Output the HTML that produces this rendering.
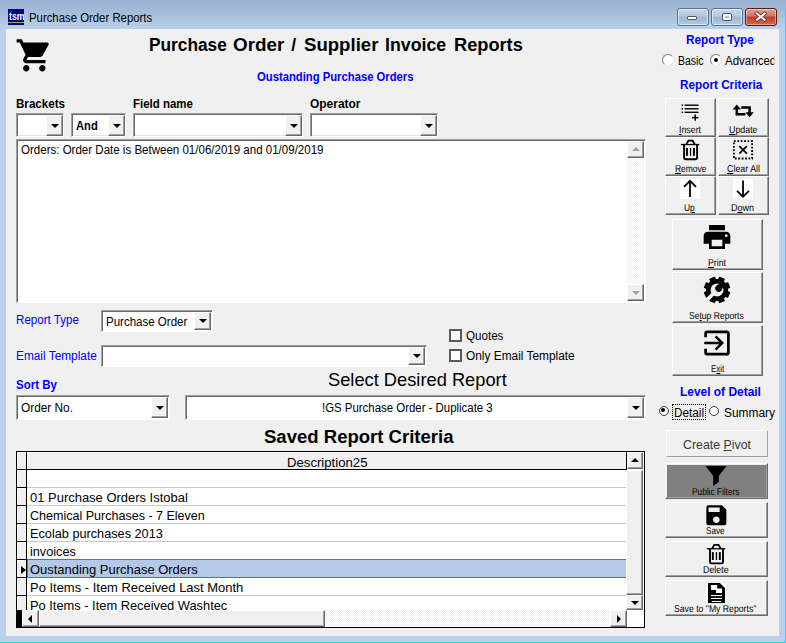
<!DOCTYPE html>
<html lang="en"><head><meta charset="utf-8"><title>Purchase Order Reports</title>
<style>
html,body{margin:0;padding:0;}
body{width:786px;height:643px;overflow:hidden;background:#b9d1ea;font-family:"Liberation Sans",sans-serif;}
#win{position:absolute;left:0;top:0;width:786px;height:643px;overflow:hidden;
 background:linear-gradient(#98b3d0 0,#a4bdd9 12px,#b1c9e4 22px,#b9d1ea 29px,#b9d1ea 100%);}
#win>*{position:absolute;box-sizing:border-box;}
.t{white-space:nowrap;line-height:1;transform-origin:0 50%;color:#000;}
.t u{text-decoration:underline;text-underline-offset:1px;}
.client{background:#f0f0f0;}
.sunk{background:#fff;border:1px solid;border-color:#a0a0a0 #fff #fff #a0a0a0;box-shadow:inset 1px 1px 0 #696969,inset -1px -1px 0 #e3e3e3;}
.cbtn{background:#f0f0f0;border:1px solid;border-color:#fff #696969 #696969 #fff;box-shadow:inset -1px -1px 0 #a0a0a0;}
.cbtn i.dn{position:absolute;left:50%;top:50%;margin:-2px 0 0 -4px;border:4px solid transparent;border-top-color:#000;border-bottom-width:0;width:0;height:0;}
.btn{background:#f0f0f0;border:1px solid;border-color:#fff #696969 #696969 #fff;box-shadow:inset -1px -1px 0 #a0a0a0;}
.ic{overflow:visible;}
.dith{background-color:#fff;background-image:conic-gradient(#f0f0f0 25%,#fff 0 50%,#f0f0f0 0 75%,#fff 0);background-size:2px 2px;}
.cbtn i{position:absolute;left:50%;top:50%;width:0;height:0;border:4px solid transparent;}
.cbtn i.upb{margin:-3px 0 0 -4px;border-bottom-color:#000;border-top-width:0;}
.cbtn i.upg{margin:-3px 0 0 -4px;border-bottom-color:#a0a0a0;border-top-width:0;}
.cbtn i.dng{margin:-2px 0 0 -4px;border-top-color:#a0a0a0;border-bottom-width:0;}
.cbtn i.lf{margin:-4px 0 0 -3px;border-right-color:#000;border-left-width:0;}
.cbtn i.rt{margin:-4px 0 0 -2px;border-left-color:#000;border-right-width:0;}
.chk{background:#f4f4f4;border:1px solid #555;box-shadow:inset 0 0 0 1px #8e8e8e;}
.radio{border-radius:50%;background:#fff;border:1px solid #6b6b6b;box-shadow:inset 1px 1px 1px #aaa;}
.radio i{position:absolute;left:3px;top:3px;width:5px;height:5px;border-radius:50%;background:#000;}
.radio{border-radius:50%;background:#fff;border:1.5px solid;border-color:#7c7c7c #e6e6e6 #e6e6e6 #7c7c7c;box-shadow:none;transform:rotate(0deg);}
.radio i{position:absolute;left:2.5px;top:2.5px;width:4px;height:4px;border-radius:50%;background:#000;}
.btn2{background:#f0f0f0;border:1px solid;border-color:#fff #a0a0a0 #a0a0a0 #fff;}
.radio2{border-radius:50%;background:#fff;border:1.6px solid #3c3c3c;}
.radio2 i{position:absolute;left:1.4px;top:1.4px;width:4px;height:4px;border-radius:50%;background:#000;}
.chk{background:#fff;border:2px solid #5a5a5a;box-shadow:none;}
.sunk2{background:#fff;border:1px solid;border-color:#a0a0a0 #fff #fff #a0a0a0;box-shadow:inset 1px 1px 0 #696969,inset -1px -1px 0 #fff;}

</style></head>
<body>
<div id="win">
<div class="client" style="left:6px;top:29px;width:773px;height:607px;"></div>
<div class="" style="left:0px;top:642px;width:786px;height:1px;background:#22d0e2"></div>
<div class="" style="left:785px;top:8px;width:1px;height:635px;background:#35cdf0"></div>
<div class="" style="left:8px;top:9px;width:16px;height:16px;background:#000080;overflow:hidden"><span style="position:absolute;left:0.5px;top:1.5px;font:bold 11px/11px 'Liberation Sans',sans-serif;color:#fff;transform:scaleX(0.8);transform-origin:0 0">tsm</span><i style="position:absolute;left:0;top:13px;width:16px;height:1px;background:#b89a50"></i></div>
<span class="t" id="t1" style="left:28.50px;top:12.01px;font-size:12px;transform:scaleX(0.9472);">Purchase Order Reports</span>
<div class="" style="left:677px;top:8px;width:32px;height:18px;border:1px solid #5c7187;border-radius:3px;box-shadow:inset 0 0 0 1px rgba(255,255,255,.55);background:linear-gradient(#c4d6ea 0,#b2c8e0 45%,#9db7d4 50%,#b3c9e2 100%)"><i style="position:absolute;left:9px;top:7.4px;width:8.4px;height:2px;background:#fff;border:1px solid #4a5a6c;border-radius:1px"></i></div>
<div class="" style="left:711px;top:8px;width:32px;height:18px;border:1px solid #5c7187;border-radius:3px;box-shadow:inset 0 0 0 1px rgba(255,255,255,.55);background:linear-gradient(#c4d6ea 0,#b2c8e0 45%,#9db7d4 50%,#b3c9e2 100%)"><i style="position:absolute;left:11px;top:4.6px;width:4.4px;height:2.4px;background:transparent;border:2px solid #fff;outline:1px solid #4a5a6c;border-radius:1px"></i></div>
<div class="" style="left:745px;top:8px;width:32px;height:18px;border:1px solid #5a1a12;border-radius:3px;box-shadow:inset 0 0 0 1px rgba(255,255,255,.4);background:linear-gradient(#e0a294 0,#d07260 45%,#c04028 50%,#cf6a4e 100%)"><svg width="30" height="16" viewBox="0 0 30 16" style="position:absolute;left:0;top:0"><path d="M11 4.7 L18.6 10.7 M18.6 4.7 L11 10.7" stroke="#5a3a38" stroke-width="3.6" stroke-linecap="square"/><path d="M11 4.7 L18.6 10.7 M18.6 4.7 L11 10.7" stroke="#fff" stroke-width="2" stroke-linecap="square"/></svg></div>
<svg class="ic" style="left:14.7px;top:35.6px" width="38.6" height="38.6" viewBox="0 0 24 24"><path d="M7 18c-1.1 0-1.99.9-1.99 2S5.9 22 7 22s2-.9 2-2-.9-2-2-2zM1 2v2h2l3.6 7.59-1.35 2.45c-.16.28-.25.61-.25.96 0 1.1.9 2 2 2h12v-2H7.42c-.14 0-.25-.11-.25-.25l.03-.12.9-1.63h7.45c.75 0 1.41-.41 1.75-1.03l3.58-6.49c.08-.14.12-.31.12-.48 0-.55-.45-1-1-1H5.21l-.94-2H1zm16 16c-1.1 0-1.99.9-1.99 2s.89 2 1.99 2 2-.9 2-2-.9-2-2-2z"/></svg>
<span class="t" id="t2" style="left:148.90px;top:37.01px;font-size:17.5px;font-weight:700;transform:scaleX(0.9873);">Purchase</span>
<span class="t" id="t3" style="left:233.20px;top:37.01px;font-size:17.5px;font-weight:700;transform:scaleX(1.0765);">Order</span>
<span class="t" id="t4" style="left:291.20px;top:37.01px;font-size:17.5px;font-weight:700;">/</span>
<span class="t" id="t5" style="left:303.80px;top:37.01px;font-size:17.5px;font-weight:700;transform:scaleX(1.0627);">Supplier</span>
<span class="t" id="t6" style="left:385.20px;top:37.01px;font-size:17.5px;font-weight:700;transform:scaleX(1.0147);">Invoice</span>
<span class="t" id="t7" style="left:453.70px;top:37.01px;font-size:17.5px;font-weight:700;transform:scaleX(1.0405);">Reports</span>
<span class="t" id="t8" style="left:256.50px;top:71.01px;font-size:12px;font-weight:700;color:#0000ff;transform:scaleX(0.9387);">Oustanding Purchase Orders</span>
<span class="t" id="t9" style="left:16.30px;top:98.01px;font-size:12px;font-weight:700;transform:scaleX(0.9664);">Brackets</span>
<span class="t" id="t10" style="left:133.40px;top:98.01px;font-size:12px;font-weight:700;transform:scaleX(0.9539);">Field name</span>
<span class="t" id="t11" style="left:309.50px;top:98.01px;font-size:12px;font-weight:700;transform:scaleX(0.9963);">Operator</span>
<div class="sunk" style="left:16px;top:113px;width:48px;height:24px;"></div>
<div class="cbtn" style="left:46px;top:115px;width:17px;height:21px;"><i class="dn"></i></div>
<div class="sunk" style="left:71px;top:113px;width:55px;height:24px;"></div>
<div class="cbtn" style="left:108px;top:115px;width:17px;height:21px;"><i class="dn"></i></div>
<span class="t" id="t12" style="left:76.30px;top:120.01px;font-size:12px;font-weight:700;transform:scaleX(0.9302);">And</span>
<div class="sunk" style="left:133px;top:113px;width:170px;height:24px;"></div>
<div class="cbtn" style="left:285px;top:115px;width:17px;height:21px;"><i class="dn"></i></div>
<div class="sunk" style="left:310px;top:113px;width:128px;height:24px;"></div>
<div class="cbtn" style="left:420px;top:115px;width:17px;height:21px;"><i class="dn"></i></div>
<div class="sunk2" style="left:16px;top:139px;width:630px;height:164px;"></div>
<span class="t" id="t13" style="left:21.00px;top:144.01px;font-size:12px;transform:scaleX(0.9607);">Orders: Order Date is Between 01/06/2019 and 01/09/2019</span>
<div class="dith" style="left:627px;top:141px;width:17px;height:160px;"></div>
<div class="cbtn" style="left:627px;top:141px;width:17px;height:17px;"><i class="upg"></i></div>
<div class="cbtn" style="left:627px;top:284px;width:17px;height:17px;"><i class="dng"></i></div>
<span class="t" id="t14" style="left:16.20px;top:314.01px;font-size:12.5px;color:#0000ff;transform:scaleX(0.9281);">Report Type</span>
<div class="sunk2" style="left:101px;top:310px;width:112px;height:22px;"></div>
<div class="cbtn" style="left:194px;top:312px;width:17px;height:18px;"><i class="dn"></i></div>
<span class="t" id="t15" style="left:106.00px;top:316.01px;font-size:12.5px;transform:scaleX(0.9214);">Purchase Order</span>
<span class="t" id="t16" style="left:16.20px;top:350.01px;font-size:12.5px;color:#0000ff;transform:scaleX(0.9480);">Email Template</span>
<div class="sunk2" style="left:101px;top:345px;width:326px;height:22px;"></div>
<div class="cbtn" style="left:408px;top:347px;width:17px;height:18px;"><i class="dn"></i></div>
<span class="t" id="t17" style="left:16.20px;top:379.00px;font-size:12.5px;font-weight:700;color:#0000ff;transform:scaleX(0.9179);">Sort By</span>
<div class="sunk2" style="left:16px;top:395px;width:154px;height:25px;"></div>
<div class="cbtn" style="left:151px;top:397px;width:17px;height:21px;"><i class="dn"></i></div>
<span class="t" id="t18" style="left:21.00px;top:402.01px;font-size:12.5px;transform:scaleX(0.9473);">Order No.</span>
<div class="sunk2" style="left:185px;top:395px;width:461px;height:25px;"></div>
<div class="cbtn" style="left:627px;top:397px;width:17px;height:21px;"><i class="dn"></i></div>
<span class="t" id="t19" style="left:322.30px;top:402.01px;font-size:12.5px;transform:scaleX(0.9134);">!GS Purchase Order - Duplicate 3</span>
<span class="t" id="t20" style="left:328.40px;top:371.01px;font-size:18.5px;transform:scaleX(0.9879);">Select Desired Report</span>
<span class="t" id="t21" style="left:264.30px;top:429.01px;font-size:17.5px;font-weight:700;transform:scaleX(1.0589);">Saved Report Criteria</span>
<div class="chk" style="left:449px;top:329px;width:13px;height:13px;"></div>
<span class="t" id="t22" style="left:465.60px;top:330.00px;font-size:12.5px;transform:scaleX(0.9278);">Quotes</span>
<div class="chk" style="left:449px;top:349px;width:13px;height:13px;"></div>
<span class="t" id="t23" style="left:465.60px;top:350.01px;font-size:12.5px;transform:scaleX(0.9502);">Only Email Template</span>
<span class="t" id="t24" style="left:685.50px;top:33.00px;font-size:13px;font-weight:700;color:#0000ff;transform:scaleX(0.9054);">Report Type</span>
<div class="radio" style="left:662px;top:54px;width:12px;height:12px;"></div>
<span class="t" id="t25" style="left:677.70px;top:55.01px;font-size:12.5px;transform:scaleX(0.8372);">Basic</span>
<div class="radio" style="left:710px;top:54px;width:12px;height:12px;"><i></i></div>
<span class="t" id="t26" style="left:725.30px;top:55.01px;font-size:12.5px;transform:scaleX(0.9207);clip-path:inset(0 2.1px 0 0);">Advanced</span>
<span class="t" id="t27" style="left:679.80px;top:78.00px;font-size:13px;font-weight:700;color:#0000ff;transform:scaleX(0.9041);">Report Criteria</span>
<div class="btn" style="left:665px;top:98px;width:51px;height:39px;"></div>
<div class="btn" style="left:718px;top:98px;width:51px;height:39px;"></div>
<div class="btn" style="left:665px;top:137px;width:51px;height:39px;"></div>
<div class="btn" style="left:718px;top:137px;width:51px;height:39px;"></div>
<div class="btn" style="left:665px;top:176px;width:51px;height:39px;"></div>
<div class="btn" style="left:718px;top:176px;width:51px;height:39px;"></div>
<div class="btn" style="left:672px;top:219px;width:91px;height:51px;"></div>
<div class="btn" style="left:672px;top:272px;width:91px;height:51px;"></div>
<div class="btn" style="left:672px;top:325px;width:91px;height:51px;"></div>
<div class="btn2" style="left:666px;top:430px;width:102px;height:27px;"></div>
<div class="btn" style="left:665px;top:463px;width:103px;height:36px;background:#808080;box-shadow:inset -1px -1px 0 #a0a0a0,inset 1px 1px 0 #f0f0f0"></div>
<div class="btn" style="left:665px;top:502px;width:103px;height:36px;"></div>
<div class="btn" style="left:665px;top:541px;width:103px;height:36px;"></div>
<div class="btn" style="left:665px;top:580px;width:103px;height:36px;"></div>
<span class="t" id="t28" style="left:680.20px;top:385.00px;font-size:13px;font-weight:700;color:#0000ff;transform:scaleX(0.9179);">Level of Detail</span>
<div class="radio2" style="left:658.8px;top:406px;width:10px;height:10px;"><i></i></div>
<div class="" style="left:672px;top:404px;width:34px;height:16px;border:1px dotted #000"></div>
<span class="t" id="t29" style="left:674.00px;top:407.00px;font-size:12.5px;transform:scaleX(0.9385);">Detail</span>
<div class="radio2" style="left:709.3px;top:406px;width:10px;height:10px;"></div>
<span class="t" id="t30" style="left:723.80px;top:407.00px;font-size:12.5px;transform:scaleX(0.9535);">Summary</span>
<span class="t" id="t31" style="left:683.00px;top:438.01px;font-size:13.5px;transform:scaleX(0.9151);color:#3a3a3a;">Create <u>P</u>ivot</span>
<div class="" style="left:16px;top:451px;width:629px;height:177px;background:#fff;border:1px solid #000"></div>
<div class="" style="left:17px;top:452px;width:9px;height:17px;background:#f0f0f0;box-shadow:inset 1px 1px 0 #fff"></div>
<div class="" style="left:27px;top:452px;width:599px;height:17px;background:#f0f0f0;box-shadow:inset 1px 1px 0 #fff"></div>
<div class="" style="left:17px;top:469px;width:610px;height:1px;background:#000"></div>
<div class="" style="left:26px;top:452px;width:1px;height:158px;background:#000"></div>
<div class="" style="left:626px;top:452px;width:1px;height:18px;background:#000"></div>
<div class="" style="left:17px;top:470px;width:9px;height:140px;background:#f0f0f0;box-shadow:inset 1px 0 0 #fff"></div>
<span class="t" id="t32" style="left:287.00px;top:457.01px;font-size:12.5px;transform:scaleX(1.0531);">Description25</span>
<div class="" style="left:17px;top:487px;width:9px;height:2px;background:#000;border-bottom:1px solid #fff"></div>
<div class="" style="left:27px;top:487px;width:599px;height:1px;background:#c8c8c8"></div>
<span class="t" id="t33" style="left:30.20px;top:491.00px;font-size:13px;transform:scaleX(0.9972);">01 Purchase Orders Istobal</span>
<div class="" style="left:17px;top:505px;width:9px;height:2px;background:#000;border-bottom:1px solid #fff"></div>
<div class="" style="left:27px;top:505px;width:599px;height:1px;background:#c8c8c8"></div>
<span class="t" id="t34" style="left:30.20px;top:509.00px;font-size:13px;transform:scaleX(0.9638);">Chemical Purchases - 7 Eleven</span>
<div class="" style="left:17px;top:523px;width:9px;height:2px;background:#000;border-bottom:1px solid #fff"></div>
<div class="" style="left:27px;top:523px;width:599px;height:1px;background:#c8c8c8"></div>
<span class="t" id="t35" style="left:30.20px;top:527.00px;font-size:13px;transform:scaleX(0.9774);">Ecolab purchases 2013</span>
<div class="" style="left:17px;top:541px;width:9px;height:2px;background:#000;border-bottom:1px solid #fff"></div>
<div class="" style="left:27px;top:541px;width:599px;height:1px;background:#c8c8c8"></div>
<span class="t" id="t36" style="left:30.20px;top:545.00px;font-size:13px;transform:scaleX(0.9751);">invoices</span>
<div class="" style="left:17px;top:559px;width:9px;height:2px;background:#000;border-bottom:1px solid #fff"></div>
<div class="" style="left:27px;top:559px;width:600px;height:19px;background:#b4c9ea;border:1px solid #2a7fd5"></div>
<span class="t" id="t37" style="left:30.20px;top:563.00px;font-size:13px;transform:scaleX(0.9966);">Oustanding Purchase Orders</span>
<div class="" style="left:17px;top:577px;width:9px;height:2px;background:#000;border-bottom:1px solid #fff"></div>
<span class="t" id="t38" style="left:30.20px;top:581.00px;font-size:13px;transform:scaleX(0.9973);">Po Items - Item Received Last Month</span>
<div class="" style="left:17px;top:595px;width:9px;height:2px;background:#000;border-bottom:1px solid #fff"></div>
<div class="" style="left:27px;top:595px;width:599px;height:1px;background:#c8c8c8"></div>
<span class="t" id="t39" style="left:30.20px;top:599.00px;font-size:13px;transform:scaleX(0.9882);">Po Items - Item Received Washtec</span>
<i style="position:absolute;left:21px;top:565.5px;width:0;height:0;border:4.5px solid transparent;border-left:5px solid #000;border-right-width:0"></i>
<div class="" style="left:627px;top:452px;width:17px;height:158px;background:#fff"></div>
<div class="cbtn" style="left:627px;top:452px;width:16px;height:17px;"><i class="upb"></i></div>
<div class="cbtn" style="left:626px;top:470px;width:17px;height:125px;"></div>
<div class="cbtn" style="left:626px;top:595px;width:17px;height:15px;"><i class="dn"></i></div>
<div class="" style="left:16px;top:610px;width:6px;height:17px;background:#000"></div>
<div class="dith" style="left:22px;top:610px;width:588px;height:17px;"></div>
<div class="cbtn" style="left:22px;top:610px;width:17px;height:17px;"><i class="lf"></i></div>
<div class="cbtn" style="left:39px;top:610px;width:286px;height:17px;"></div>
<div class="cbtn" style="left:610px;top:610px;width:17px;height:17px;"><i class="rt"></i></div>
<div class="" style="left:627px;top:610px;width:17px;height:17px;background:#fff"></div>
<span class="t" id="t40" style="left:679.00px;top:126.00px;font-size:10px;transform:scaleX(0.8795);text-rendering:geometricPrecision;"><u>I</u>nsert</span>
<span class="t" id="t41" style="left:728.50px;top:126.00px;font-size:10px;transform:scaleX(0.8833);text-rendering:geometricPrecision;"><u>U</u>pdate</span>
<span class="t" id="t42" style="left:675.00px;top:165.00px;font-size:10px;transform:scaleX(0.8456);text-rendering:geometricPrecision;"><u>R</u>emove</span>
<span class="t" id="t43" style="left:726.50px;top:165.00px;font-size:10px;transform:scaleX(0.8859);text-rendering:geometricPrecision;"><u>C</u>lear All</span>
<span class="t" id="t44" style="left:684.20px;top:204.00px;font-size:10px;transform:scaleX(0.8440);text-rendering:geometricPrecision;">U<u>p</u></span>
<span class="t" id="t45" style="left:731.10px;top:204.00px;font-size:10px;transform:scaleX(0.8987);text-rendering:geometricPrecision;">D<u>o</u>wn</span>
<span class="t" id="t46" style="left:708.30px;top:259.00px;font-size:10px;transform:scaleX(0.8699);text-rendering:geometricPrecision;"><u>P</u>rint</span>
<span class="t" id="t47" style="left:689.30px;top:312.00px;font-size:10px;transform:scaleX(0.8556);text-rendering:geometricPrecision;">Se<u>t</u>up Reports</span>
<span class="t" id="t48" style="left:710.50px;top:365.00px;font-size:10px;transform:scaleX(0.7978);text-rendering:geometricPrecision;">E<u>x</u>it</span>
<span class="t" id="t49" style="left:692.20px;top:488.00px;font-size:10px;transform:scaleX(0.8279);text-rendering:geometricPrecision;">Public Filters</span>
<span class="t" id="t50" style="left:706.20px;top:527.00px;font-size:10px;transform:scaleX(0.8159);text-rendering:geometricPrecision;">Save</span>
<span class="t" id="t51" style="left:703.20px;top:566.00px;font-size:10px;transform:scaleX(0.8890);text-rendering:geometricPrecision;">Delete</span>
<span class="t" id="t52" style="left:674.10px;top:605.00px;font-size:10px;transform:scaleX(0.8670);text-rendering:geometricPrecision;">Save to "My Reports"</span>
<svg class="ic" style="left:0;top:0" width="786" height="643" viewBox="0 0 786 643"><rect x="684.6" y="104.5" width="14" height="1.4"/><rect x="681.6" y="104.5" width="1.5" height="1.4"/><rect x="684.6" y="108.1" width="14" height="1.4"/><rect x="681.6" y="108.1" width="1.5" height="1.4"/><rect x="684.6" y="111.6" width="14" height="1.4"/><rect x="681.6" y="111.6" width="1.5" height="1.4"/><rect x="692" y="116.9" width="6.4" height="1.5"/><rect x="694.45" y="114.4" width="1.5" height="6.4"/></svg>
<svg class="ic" style="left:0;top:0" width="786" height="643" viewBox="0 0 786 643"><path d="M736.8 108 V114.2 H745.4" fill="none" stroke="#000" stroke-width="2.5"/><path d="M732.6 109.6 L736.8 104.6 L741 109.6Z"/><path d="M741.2 107.5 H749.6 V113.6" fill="none" stroke="#000" stroke-width="2.5"/><path d="M745.4 112.2 L749.6 117.2 L753.8 112.2Z"/></svg>
<svg class="ic" style="left:0;top:0" width="786" height="643" viewBox="0 0 786 643"><g transform="translate(680.9 139.8)"><path d="M5.4 4.5 L7.5 0.9 H11.7 L13.8 4.5" fill="none" stroke="#000" stroke-width="1.8" stroke-linejoin="miter"/><rect x="0" y="4.1" width="18.4" height="1.3"/><path d="M3.2 5 V18 Q3.2 19.4 4.6 19.4 H14.8 Q16.2 19.4 16.2 18 V5" fill="none" stroke="#000" stroke-width="1.9"/><rect x="5.1" y="8.1" width="1.9" height="7.9"/><rect x="9" y="8.1" width="1.3" height="7.9"/><rect x="12.1" y="8.1" width="1.9" height="7.9"/></g></svg>
<svg class="ic" style="left:0;top:0" width="786" height="643" viewBox="0 0 786 643"><g transform="translate(706.8 544)"><path d="M5.4 4.5 L7.5 0.9 H11.7 L13.8 4.5" fill="none" stroke="#000" stroke-width="1.8" stroke-linejoin="miter"/><rect x="0" y="4.1" width="18.4" height="1.3"/><path d="M3.2 5 V18 Q3.2 19.4 4.6 19.4 H14.8 Q16.2 19.4 16.2 18 V5" fill="none" stroke="#000" stroke-width="1.9"/><rect x="5.1" y="8.1" width="1.9" height="7.9"/><rect x="9" y="8.1" width="1.3" height="7.9"/><rect x="12.1" y="8.1" width="1.9" height="7.9"/></g></svg>
<svg class="ic" style="left:0;top:0" width="786" height="643" viewBox="0 0 786 643"><rect x="733.9" y="141.1" width="18.2" height="17.4" fill="none" stroke="#000" stroke-width="1.8" stroke-dasharray="1.8 1.6"/><path d="M739.3 146.1 L746.9 153.7 M746.9 146.1 L739.3 153.7" stroke="#000" stroke-width="1.7" fill="none"/></svg>
<div class="" style="left:680px;top:179px;width:20px;height:20px;background:#fff"></div>
<div class="" style="left:733px;top:179px;width:20px;height:20px;background:#fff"></div>
<svg class="ic" style="left:0;top:0" width="786" height="643" viewBox="0 0 786 643"><path d="M690 180.6 V197 M684 186.8 L690 180.8 L696 186.8" fill="none" stroke="#000" stroke-width="1.8"/><path d="M743 180.6 V197 M737 190.8 L743 196.8 L749 190.8" fill="none" stroke="#000" stroke-width="1.8"/></svg>
<svg class="ic" style="left:700.8px;top:221px" width="32" height="32" viewBox="0 0 24 24"><path d="M19 8H5c-1.66 0-3 1.34-3 3v6h4v4h12v-4h4v-6c0-1.66-1.34-3-3-3zm-3 11H8v-5h8v5zm3-7c-.55 0-1-.45-1-1s.45-1 1-1 1 .45 1 1-.45 1-1 1zm-1-9H6v4h12V3z"/></svg>
<svg class="ic" style="left:0;top:0" width="786" height="643" viewBox="0 0 786 643"><circle cx="717.05" cy="289.95" r="11"/><rect x="713.95" y="276.75" width="6.2" height="5" rx="0.6" transform="rotate(22.5 717.05 289.95)"/><rect x="713.95" y="276.75" width="6.2" height="5" rx="0.6" transform="rotate(67.5 717.05 289.95)"/><rect x="713.95" y="276.75" width="6.2" height="5" rx="0.6" transform="rotate(112.5 717.05 289.95)"/><rect x="713.95" y="276.75" width="6.2" height="5" rx="0.6" transform="rotate(157.5 717.05 289.95)"/><rect x="713.95" y="276.75" width="6.2" height="5" rx="0.6" transform="rotate(202.5 717.05 289.95)"/><rect x="713.95" y="276.75" width="6.2" height="5" rx="0.6" transform="rotate(247.5 717.05 289.95)"/><rect x="713.95" y="276.75" width="6.2" height="5" rx="0.6" transform="rotate(292.5 717.05 289.95)"/><rect x="713.95" y="276.75" width="6.2" height="5" rx="0.6" transform="rotate(337.5 717.05 289.95)"/><circle cx="717.05" cy="289.95" r="6.5" fill="#f0f0f0"/><g transform="rotate(45 717.05 289.95)"><rect x="715.2" y="293.95" width="3.7" height="11" fill="#f0f0f0"/><circle cx="717.05" cy="287.55" r="3.5"/><rect x="714.45" y="280.45" width="5.2" height="7"/></g></svg>
<svg class="ic" style="left:0;top:0" width="786" height="643" viewBox="0 0 786 643"><path d="M705.6 337.2 V333.6 Q705.6 331.8 707.4 331.8 H726.6 Q728.4 331.8 728.4 333.6 V352.4 Q728.4 354.2 726.6 354.2 H707.4 Q705.6 354.2 705.6 352.4 V348.8" fill="none" stroke="#000" stroke-width="2.7"/><path d="M704.2 343 H721.5 M715.6 336.4 L722.2 343 L715.6 349.6" fill="none" stroke="#000" stroke-width="2.5"/></svg>
<svg class="ic" style="left:0;top:0" width="786" height="643" viewBox="0 0 786 643"><path d="M705.6 466 H726.6 L718.8 476 V482 L713.2 486 V476 Z"/></svg>
<svg class="ic" style="left:702.7px;top:501.9px" width="26.7" height="26.7" viewBox="0 0 24 24"><path d="M17 3H5c-1.11 0-2 .9-2 2v14c0 1.1.89 2 2 2h14c1.1 0 2-.9 2-2V7l-4-4zm-5 16c-1.66 0-3-1.34-3-3s1.34-3 3-3 3 1.34 3 3-1.34 3-3 3zm3-10H5V5h10v4z"/></svg>
<div class="" style="left:706px;top:583px;width:20px;height:20px;background:#fff"></div>
<svg class="ic" style="left:0;top:0" width="786" height="643" viewBox="0 0 786 643"><path d="M708.6 583 H719.8 L725 588.1 V603 H708 V583.6Z"/><path d="M711.4 584.9 H717.2 V588.6 H722 V592.9 H716.1 V589.9 H710.9 V585.4Z" fill="#fff"/><rect x="710.9" y="595" width="11.1" height="1.1" fill="#fff"/><rect x="710.9" y="597.9" width="11.1" height="1.1" fill="#fff"/><rect x="711.8" y="601" width="9.4" height="1" fill="#fff"/></svg>
</div>
</body></html>
